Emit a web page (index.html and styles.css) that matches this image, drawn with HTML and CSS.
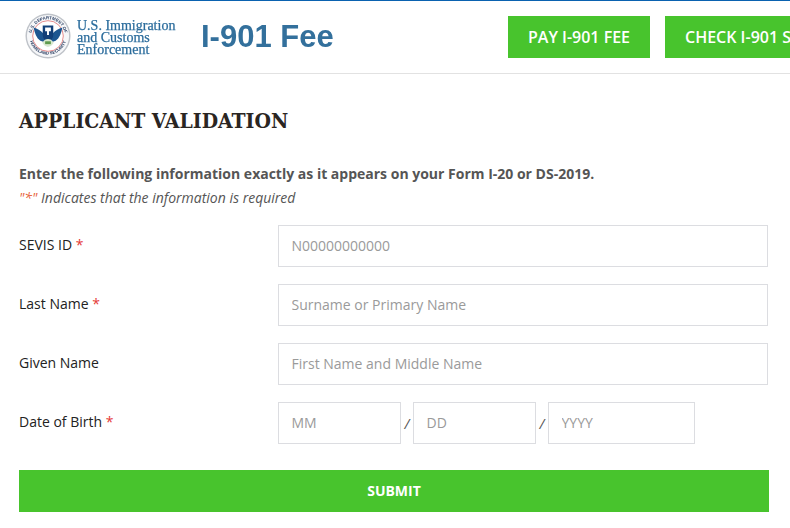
FILE: index.html
```html
<!DOCTYPE html>
<html lang="en">
<head>
<meta charset="utf-8">
<title>I-901 Fee</title>
<link rel="stylesheet" href="styles.css">
</head>
<body>
<header class="header">
  <div class="brand">
    <svg class="seal" viewBox="0 0 48 48" aria-hidden="true">
      <defs>
        <path id="seal-arc-top" d="M6.500 24a17.500 17.500 0 0 1 35 0"/>
        <path id="seal-arc-bottom" d="M4.500 24a19.500 19.500 0 0 0 39 0"/>
      </defs>
      <circle cx="24" cy="24" r="23.500" fill="#bfc3c9"/>
      <circle cx="24" cy="24" r="22" fill="#f6f7f9"/>
      <text class="seal-text"><textPath href="#seal-arc-top" startOffset="50%" text-anchor="middle">U.S. DEPARTMENT OF</textPath></text>
      <text class="seal-text"><textPath href="#seal-arc-bottom" startOffset="50%" text-anchor="middle">HOMELAND SECURITY</textPath></text>
      <circle cx="24" cy="24" r="16" fill="#fff" stroke="#e58a8a" stroke-width="1"/>
      <path d="M9 15c4 1 7 3 10 6l5 3 5-3c3-3 6-5 10-6-1 6-3 11-7 14l-3 1-5 5-5-5-3-1c-4-3-6-8-7-14z" fill="#1d5690"/>
      <path d="M18.500 13h11v10c0 4-3 6-5.500 7-2.500-1-5.500-3-5.500-7z" fill="#123f78"/>
      <path d="M21 15h6v4h-2v4h-2v-4h-2z" fill="#fff"/>
      <path d="M18 31c2-3 3.500-4 6-4s4 1 6 4c-2 3-3.500 4-6 4s-4-1-6-4z" fill="#d8e8cf"/>
      <path d="M21 29.500h6v3h-6z" fill="#5f9a4e"/>
    </svg>
    <div class="agency">U.S. Immigration<br>and Customs<br>Enforcement</div>
    <div class="fee-title">I-901 Fee</div>
  </div>
  <nav class="nav">
    <a class="nav-btn" href="#">PAY I-901 FEE</a>
    <a class="nav-btn nav-btn-wide" href="#">CHECK I-901 STATUS</a>
  </nav>
</header>
<main class="main">
  <h1 class="title">APPLICANT VALIDATION</h1>
  <p class="lead">Enter the following information exactly as it appears on your Form I-20 or DS-2019.</p>
  <p class="note"><span class="note-mark">"*"</span> Indicates that the information is required</p>
  <form class="form">
    <div class="row">
      <label class="label" for="sevis">SEVIS ID <span class="req">*</span></label>
      <input class="input" id="sevis" placeholder="N00000000000">
    </div>
    <div class="row">
      <label class="label" for="last">Last Name <span class="req">*</span></label>
      <input class="input" id="last" placeholder="Surname or Primary Name">
    </div>
    <div class="row">
      <label class="label" for="given">Given Name</label>
      <input class="input" id="given" placeholder="First Name and Middle Name">
    </div>
    <div class="row">
      <label class="label" for="mm">Date of Birth <span class="req">*</span></label>
      <div class="date">
        <input class="input input-md" id="mm" placeholder="MM">
        <span class="sep">/</span>
        <input class="input input-md" placeholder="DD">
        <span class="sep">/</span>
        <input class="input input-y" placeholder="YYYY">
      </div>
    </div>
    <button class="submit" type="button">SUBMIT</button>
  </form>
</main>
</body>
</html>
```
FILE: styles.css
```css
* { box-sizing: border-box; }
html, body { margin: 0; height: 528px; overflow: hidden; background: #fff; }
body { font-family: "Open Sans", "Liberation Sans", sans-serif; color: #222; }

.header {
  height: 74px;
  border-top: 1px solid #0a62b0;
  border-bottom: 1px solid #e2e2e2;
  display: flex;
  align-items: flex-start;
  justify-content: space-between;
  overflow: hidden;
}
.brand { display: flex; align-items: center; padding: 12px 0 0 25px; height: 60px; }
.seal { width: 46px; height: 46px; flex: none; margin-top: -2px; filter: blur(.4px); }
.seal-text { font: 700 4.500px "Liberation Sans", sans-serif; fill: #2b3f63; }
.agency {
  margin: 2px 0 0 6px;
  font: 400 14px/12px "Liberation Serif", serif;
  color: #2b6c9c;
  width: 124px;
  white-space: nowrap;
  -webkit-text-stroke: .25px #2b6c9c;
  filter: blur(.3px);
}
.fee-title {
  font: 700 31px/40px "Liberation Sans", sans-serif;
  color: #33709c;
  white-space: nowrap;
  filter: blur(.3px);
}
.nav { display: flex; gap: 15px; padding-top: 15px; width: 282px; flex: none; }
.nav-btn {
  flex: none;
  width: 142px;
  height: 42px;
  background: #48c42d;
  color: #fff;
  font-weight: 600;
  font-size: 16px;
  line-height: 42px;
  text-align: center;
  text-decoration: none;
  white-space: nowrap;
}
.nav-btn-wide { width: 200px; padding-left: 20px; text-align: left; }

.main { padding: 0 21px 0 19px; }
.title {
  margin: 32px 0 0;
  font: 700 21px/30px "DejaVu Serif", serif;
  font-stretch: condensed;
  color: #2a2522;
}
.lead { margin: 28px 0 0; font-size: 14px; line-height: 20px; font-weight: 700; color: #555; }
.note { margin: 4px 0 0; font-size: 14px; line-height: 20px; font-style: italic; color: #555; }
.note-mark { color: #e8643c; }
.form { margin-top: 17px; display: flex; flex-direction: column; gap: 17px; }
.row { display: grid; grid-template-columns: 259px 490px; align-items: center; height: 42px; }
.label { font-size: 14px; line-height: 20px; color: #222; position: relative; top: -1px; }
.req { color: #e53935; }
.input {
  display: block;
  width: 100%;
  height: 42px;
  border: 1px solid #dcdde1;
  background: #fff;
  padding: 0 13px 2px 12.500px;
  font: 14px "Open Sans", sans-serif;
  color: #333;
  outline: none;
  border-radius: 0;
}
.input::placeholder { color: #9a9a9a; opacity: 1; }
.date { display: flex; align-items: center; }
.input-md { width: 123px; flex: none; }
.input-y { width: 147px; flex: none; }
.sep { width: 12px; text-align: center; font-size: 14px; color: #555; font-style: italic; }
.submit {
  margin-top: 9px;
  width: 750px;
  height: 42px;
  border: 0;
  padding: 0 0 2px;
  background: #48c42d;
  color: #fff;
  font: 700 14px "Open Sans", sans-serif;
  cursor: pointer;
}
```
